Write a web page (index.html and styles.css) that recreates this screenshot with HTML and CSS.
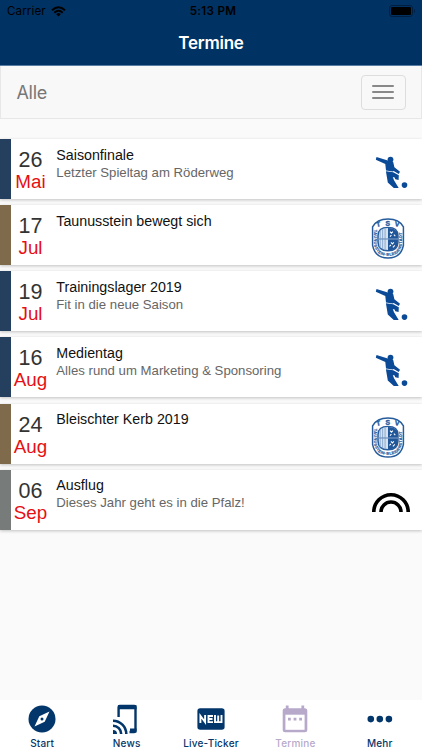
FILE: index.html
```html
<!DOCTYPE html>
<html lang="de">
<head>
<meta charset="utf-8">
<title>Termine</title>
<link rel="stylesheet" href="styles.css">
</head>
<body>
<svg class="defs" width="0" height="0">
  <defs>
    <symbol id="player" viewBox="0 0 34 34">
      <g fill="#0b4a96">
        <circle cx="16.5" cy="3.6" r="2.9"/>
        <path d="M2.5 .9 13 4.3 19.2 6 20.4 11.2 26 15.8 24.7 17.9 19.7 15 18.7 15.6 12 14.6 11.3 8 1.8 3.7Z"/>
        <path d="M11.9 15.2 19.2 16.2 24.8 19.2 24.6 23.9 21.3 23.3 20.6 21.4 18.8 21 20 24.2 24.7 31.9 19.8 31.9 13.8 26.4Z"/>
        <circle cx="30.5" cy="29.1" r="2.8"/>
      </g>
    </symbol>
    <symbol id="crest" viewBox="0 0 34 42">
      <path d="M17 1C10 1 4 4 1.2 9V28C3 37 9 41 17 41S31 37 32.8 28V9C30 4 24 1 17 1Z" fill="#fff" stroke="#265b9c" stroke-width="1.5"/>
      <path d="M17 9.6C10 9.6 6.8 13 6.8 18V24.5C6.8 30.5 10 33.5 17 33.5S27.2 30.5 27.2 24.5V18C27.2 13 24 9.6 17 9.6Z" fill="#d6e2f0" stroke="#265b9c" stroke-width="1.5"/>
      <path d="M17 10.2C24 10.2 27 13.5 27 18V24.5C27 30 24 33 17 33Z" fill="#20569a"/>
      <path d="M9 13V31M11.5 11.5V32M14 11V33" stroke="#8aa9ce" stroke-width="1"/>
      <path d="M6.8 21.5H27.2" stroke="#7193bd" stroke-width="1.3"/>
      <path d="M19 14l1.5 1.5L22 14M23 17l1.5 1.5M19 19l1.5-1.5M20 25l1.5 1.5L23 25M24 28l-2 2M18.5 29l1.5-1.5" stroke="#fff" stroke-width="1.1" fill="none"/>
      <path id="crest-top" d="M5.5 9.4Q17 6.4 30 9.4" fill="none"/>
      <path id="crest-rim" d="M2.6 12V27C4.5 36 10 38.8 17 38.8S29.5 36 31.4 27V11" fill="none"/>
      <text class="crest-title"><textPath href="#crest-top" textLength="23">TSV</textPath></text>
      <text class="crest-name"><textPath href="#crest-rim" textLength="68">TAUNUSSTEIN·BLEIDENSTADT</textPath></text>
    </symbol>
  </defs>
</svg>
<div class="app">
  <header class="top">
    <div class="status">
      <div class="carrier">Carrier
        <svg width="15" height="11" viewBox="0 0 15 11" fill="none" stroke="#000" stroke-width="2"><path d="M1 4.2Q7.5-1.8 14 4.2M3.3 6.7Q7.5 2.8 11.7 6.7"/><path d="M5.2 8.2Q7.5 6 9.8 8.2L7.5 10.5Z" fill="#000" stroke="none"/></svg>
      </div>
      <div class="time">5:13 PM</div>
      <svg class="battery" width="27" height="12" viewBox="0 0 27 12"><rect x=".5" y=".5" width="23" height="11" rx="2.7" fill="none" stroke="#001f40"/><rect x="2" y="2" width="20" height="8" rx="1.2"/><path d="M25 4Q27 6 25 8Z" fill="#001f40"/></svg>
    </div>
    <h1>Termine</h1>
  </header>
  <div class="filter">
    <span>Alle</span>
    <button class="toggle" aria-label="Menü"><i></i><i></i><i></i></button>
  </div>
  <main>
    <article class="event blue"><div class="date">26<b>Mai</b></div><div class="info"><h2>Saisonfinale</h2><p>Letzter Spieltag am Röderweg</p></div><svg class="player"><use href="#player"/></svg></article>
    <article class="event brown"><div class="date">17<b>Jul</b></div><div class="info"><h2>Taunusstein bewegt sich</h2></div><svg class="crest"><use href="#crest"/></svg></article>
    <article class="event blue"><div class="date">19<b>Jul</b></div><div class="info"><h2>Trainingslager 2019</h2><p>Fit in die neue Saison</p></div><svg class="player"><use href="#player"/></svg></article>
    <article class="event blue"><div class="date">16<b>Aug</b></div><div class="info"><h2>Medientag</h2><p>Alles rund um Marketing &amp; Sponsoring</p></div><svg class="player"><use href="#player"/></svg></article>
    <article class="event brown"><div class="date">24<b>Aug</b></div><div class="info"><h2>Bleischter Kerb 2019</h2></div><svg class="crest"><use href="#crest"/></svg></article>
    <article class="event gray"><div class="date">06<b>Sep</b></div><div class="info"><h2>Ausflug</h2><p>Dieses Jahr geht es in die Pfalz!</p></div><svg class="arch" viewBox="0 0 38 19" fill="none" stroke="#000" stroke-width="3.6"><path d="M1.8 19A17.2 17.2 0 0 1 36.2 19M9 19A10 10 0 0 1 29 19"/></svg></article>
  </main>
  <nav class="tabs">
    <a><svg width="28" height="28" viewBox="0 0 28 28"><circle cx="14" cy="14" r="13.5" fill="#03366a"/><path d="M21.5 6.5 16.7 16.7 6.5 21.5 11.3 11.3Z" fill="#fff"/><circle cx="14" cy="14" r="1.5" fill="#03366a"/></svg><span>Start</span></a>
    <a><svg class="news" width="26" height="31" viewBox="0 0 26 31" fill="none" stroke="#03366a"><path d="M6.6 13V3.2Q6.6 2 7.8 2H22.3Q23.5 2 23.5 3.2V26.8Q23.5 28 22.3 28H17.5" stroke-width="2.4"/><path d="M6 3.3H24.5M18 26.5H24.5" stroke-width="4"/><path d="M1 16.7A13.3 13.3 0 0 1 14.3 30M1 21.8A8.2 8.2 0 0 1 9.2 30" stroke-width="2.6"/><path d="M1 26A4 4 0 0 1 5 30H1Z" fill="#03366a" stroke="none"/></svg><span>News</span></a>
    <a><svg width="28" height="28" viewBox="0 0 28 28"><rect x=".4" y="3.2" width="27.2" height="21.6" rx="2.8" fill="#03366a"/><g fill="none" stroke="#fff" stroke-width="1.9"><path d="M3.4 18V10.8L8.1 17.2V10M16 11H11.5V17.1H16M11.5 14H15.5M18 10V17.1H24.5V10M21.2 10.5V17"/></g></svg><span>Live-Ticker</span></a>
    <a class="active"><svg width="28" height="28" viewBox="0 0 28 28"><path d="M4.8.5H7.6V3.2H20.4V.5H23.2V3.2H23.8Q26.3 3.2 26.3 5.7V24.8Q26.3 27.3 23.8 27.3H4.2Q1.7 27.3 1.7 24.8V5.7Q1.7 3.2 4.2 3.2H4.8Z" fill="#b7a9ca"/><path d="M4.4 9.7H23.6V24.8H4.4Z" fill="#fff"/><path d="M7 12.7H9.8V15.4H7ZM12.6 12.7H15.4V15.4H12.6ZM18.2 12.7H21V15.4H18.2Z" fill="#b7a9ca"/></svg><span>Termine</span></a>
    <a><svg width="28" height="28" viewBox="0 0 28 28" fill="#03366a"><circle cx="4.8" cy="14.1" r="3.3"/><circle cx="13.8" cy="14.1" r="3.3"/><circle cx="22.9" cy="14.1" r="3.3"/></svg><span>Mehr</span></a>
  </nav>
</div>
</body>
</html>
```
FILE: styles.css
```css
* { box-sizing: border-box; }
body { margin: 0; background: #fafafa; font-family: "Liberation Sans", Arial, sans-serif; }
.defs { position: absolute; }
.app { display: flex; flex-direction: column; width: 422px; height: 750px; overflow: hidden; }
.top { flex: none; height: 66px; background: #003263; border-bottom: 1px solid #577da5; font-family: Inter, sans-serif; }
.status { display: grid; grid-template-columns: 1fr auto 1fr; align-items: center; height: 22px; padding: 0 6px 0 7px; font-size: 11.6px; }
.carrier { display: flex; align-items: center; gap: 5px; letter-spacing: .1px; }
.time { font-weight: 600; letter-spacing: .3px; padding-left: 3px; }
.battery { justify-self: end; }
.top h1 { margin: 0; height: 43px; line-height: 43px; text-align: center; color: #fff; font-size: 17px; font-weight: 600; letter-spacing: -.25px; }
.filter { flex: none; display: flex; align-items: center; justify-content: space-between; height: 53px; padding: 0 15.5px; border: 1px solid #e7e7e7; border-top: 0; background: #f8f8f8; color: #777; font: 18px Inter, sans-serif; letter-spacing: -.3px; }
.toggle { display: flex; flex-direction: column; align-items: center; justify-content: center; gap: 4px; width: 45px; height: 35px; padding: 0; border: 1px solid #ddd; border-radius: 4px; background: transparent; }
.toggle i { width: 22px; height: 2px; border-radius: 1px; background: #888; }
main { flex: 1; padding-top: 20px; }
.event { display: flex; height: 60px; margin-bottom: 6.15px; background: #fff; border-left: 11px solid; box-shadow: 0 1px 3px rgba(0,0,0,.23); }
.blue { border-color: #25405f; }
.brown { border-color: #806a4c; }
.gray { border-color: #777b79; }
.date { width: 39px; flex: none; padding-top: 11px; text-align: center; color: #333; font-size: 21.5px; line-height: 21px; }
.date b { display: block; color: #e60f14; font-weight: 400; font-size: 18.8px; line-height: 22px; }
.info { flex: 1; padding: 6.7px 0 0 6.3px; }
.info h2 { margin: 0; color: #111; font-size: 14.25px; font-weight: 400; line-height: 18px; }
.info p { margin: 0; color: #666; font-size: 13.2px; line-height: 17.4px; }
.player { flex: none; width: 34px; height: 34px; margin: 17px 14px 0 0; }
.crest { flex: none; width: 34px; height: 41px; margin: 13px 17px 0 0; }
.arch { flex: none; width: 38px; height: 19px; margin: 23px 12px 0 0; }
.crest-title { fill: #265b9c; stroke: #265b9c; stroke-width: .4px; font: bold 7px "Liberation Sans", sans-serif; }
.crest-name { fill: #265b9c; stroke: #265b9c; stroke-width: .2px; font: bold 4px "Liberation Sans", sans-serif; }
.tabs { flex: none; height: 50px; display: grid; grid-template-columns: repeat(5, 1fr); background: #fff; font: 500 10px Inter, sans-serif; letter-spacing: .2px; color: #03366a; }
.tabs a { display: flex; flex-direction: column; align-items: center; padding-top: 5px; }
.tabs svg { display: block; flex: none; }
.tabs .news { margin: -1px 3px -2px 0; }
.tabs span { margin-top: 4px; line-height: 12px; }
.tabs .active { color: #b7a9ca; }
```
